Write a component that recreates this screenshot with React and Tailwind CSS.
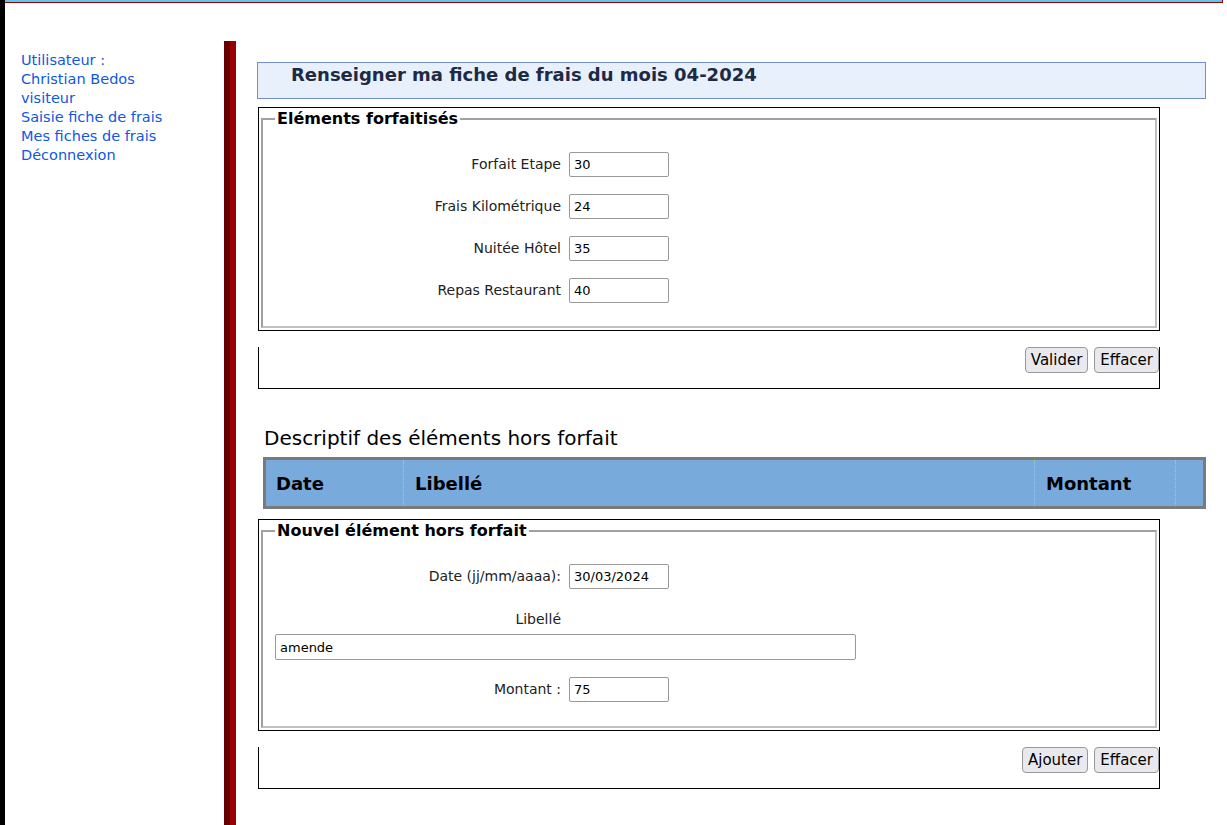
import React from "react";

const font = { fontFamily: '"DejaVu Sans", Verdana, sans-serif' };

function Row({ label, value }) {
  return (
    <div className="flex items-center h-[25px]">
      <div className="w-[294px] text-right pr-[8px] text-[14px] text-[#222]">{label}</div>
      <input
        readOnly
        value={value}
        className="w-[100px] h-[25px] border border-[#999] rounded-[2px] px-[4px] text-[13px] text-black bg-white outline-none"
        style={font}
      />
    </div>
  );
}

function Btn({ children }) {
  return (
    <button
      className="h-[26px] px-[5px] border border-[#999] rounded-[4px] bg-[#e9e9ed] text-[15px] text-black"
      style={font}
    >
      {children}
    </button>
  );
}

function Fieldset({ legend, children, className }) {
  return (
    <div className={"ml-[1px] w-[902px] border border-black p-[2px] " + (className || "")}>
      <fieldset className="border-2 border-[#c0c0c0] border-t-[#a0a0a0] border-l-[#a0a0a0] px-[12px] pb-[10px] h-full">
        <legend className="px-[2px] font-bold text-[16px] text-black leading-[18px]">{legend}</legend>
        {children}
      </fieldset>
    </div>
  );
}

export default function App() {
  return (
    <div className="min-h-[825px] border-l-[5px] border-black bg-white" style={font}>
      <div className="h-[3px] mr-[4px] bg-[#5bc8ef] border-b border-r border-[#990000]" />
      <div className="flex mt-[38px] min-h-[784px]">
        <div className="w-[219px] pl-[16px] pt-[10px] text-[14.5px] leading-[19px] text-[#1058e0]">
          <div>Utilisateur :</div>
          <div>Christian Bedos</div>
          <div>visiteur</div>
          <div>Saisie fiche de frais</div>
          <div>Mes fiches de frais</div>
          <div>Déconnexion</div>
        </div>
        <div className="w-[12px] bg-[#990000] border-l-[6px] border-[#660000]" />
        <div className="pl-[21px] pt-[21px]">
          <div className="w-[949px] h-[37px] bg-[#e8f0fc] border border-[#6f8fcf] pl-[33px] pt-[1px] leading-[22px] font-bold text-[18px] text-[#1e2a44]">
            Renseigner ma fiche de frais du mois 04-2024
          </div>

          <Fieldset legend="Eléments forfaitisés" className="mt-[8px] h-[224px]">
            <div className="flex flex-col gap-[17px] pt-[24px]">
              <Row label="Forfait Etape" value="30" />
              <Row label="Frais Kilométrique" value="24" />
              <Row label="Nuitée Hôtel" value="35" />
              <Row label="Repas Restaurant" value="40" />
            </div>
          </Fieldset>

          <div className="ml-[1px] mt-[16px] w-[902px] h-[42px] border-l border-r border-b border-black flex justify-end gap-[6px]">
            <Btn>Valider</Btn>
            <Btn>Effacer</Btn>
          </div>

          <div className="mt-[37px] ml-[7px] text-[20px] leading-[24px] text-black">Descriptif des éléments hors forfait</div>

          <div className="mt-[7px] ml-[6px] w-[943px] h-[52px] border-[3px] border-[#7a7a7a] bg-[#78aadc] flex font-bold text-[18px] text-black">
            <div className="w-[137px] pl-[10px] flex items-center">Date</div>
            <div className="w-[631px] pl-[11px] flex items-center border-l border-dotted border-[#c0d050]">Libellé</div>
            <div className="w-[141px] pl-[11px] flex items-center border-l border-dotted border-[#c0d050]">Montant</div>
            <div className="flex-1 border-l border-dotted border-[#c0d050]" />
          </div>

          <Fieldset legend="Nouvel élément hors forfait" className="mt-[10px] h-[212px]">
            <div className="pt-[24px]">
              <Row label="Date (jj/mm/aaaa):" value="30/03/2024" />
              <div className="mt-[20px] text-right pr-[8px] w-[294px] text-[14px] text-[#222]">Libellé</div>
              <input
                readOnly
                value="amende"
                className="mt-[4px] block w-[581px] h-[26px] border border-[#999] rounded-[2px] px-[4px] text-[13px] text-black bg-white outline-none"
                style={font}
              />
              <div className="mt-[17px]">
                <Row label="Montant :" value="75" />
              </div>
            </div>
          </Fieldset>

          <div className="ml-[1px] mt-[16px] w-[902px] h-[42px] border-l border-r border-b border-black flex justify-end gap-[6px]">
            <Btn>Ajouter</Btn>
            <Btn>Effacer</Btn>
          </div>
        </div>
      </div>
    </div>
  );
}
